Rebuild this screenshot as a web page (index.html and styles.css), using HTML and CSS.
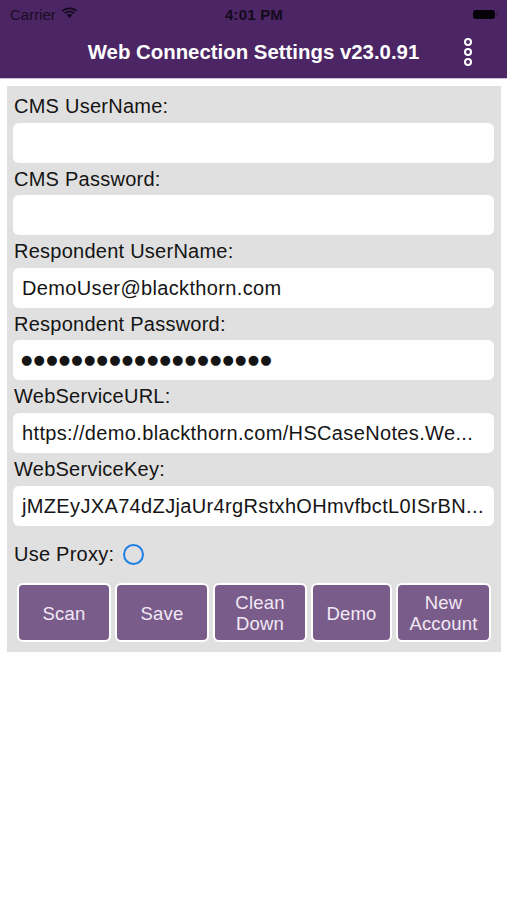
FILE: index.html
```html
<!DOCTYPE html>
<html>
<head>
<meta charset="utf-8">
<title>Web Connection Settings</title>
<link rel="stylesheet" href="styles.css">
</head>
<body>
<header class="topbar">
  <div class="statusbar">
    <div class="carrier">Carrier
      <svg class="wifi" width="17" height="12" viewBox="0 0 17 12">
        <path d="M8.5 2.2c2.5 0 4.8 1 6.5 2.6l1.3-1.3C14.2 1.5 11.5.4 8.5.4S2.8 1.5.7 3.5L2 4.8c1.7-1.6 4-2.6 6.5-2.6z" fill="#140a1c"/>
        <path d="M8.5 5.5c1.6 0 3 .6 4.1 1.6l1.3-1.3C12.5 4.5 10.6 3.7 8.5 3.7S4.5 4.5 3.1 5.8l1.3 1.3c1.1-1 2.5-1.6 4.1-1.6z" fill="#140a1c"/>
        <path d="M8.5 6.9c1.1 0 2.1.4 2.8 1.1l-2.8 2.9-2.8-2.9c.7-.7 1.7-1.1 2.8-1.1z" fill="#140a1c"/>
      </svg>
    </div>
    <div class="time">4:01 PM</div>
    <div class="battery"><span class="batt-body"></span><span class="batt-nub"></span></div>
  </div>
  <div class="navbar">
    <h1 class="title">Web Connection Settings v23.0.91</h1>
    <svg class="kebab" width="12" height="32" viewBox="0 0 12 32">
      <circle cx="6" cy="6" r="3" fill="#4b2564" stroke="#fff" stroke-width="2"/>
      <circle cx="6" cy="16" r="3" fill="#4b2564" stroke="#fff" stroke-width="2"/>
      <circle cx="6" cy="26" r="3" fill="#4b2564" stroke="#fff" stroke-width="2"/>
    </svg>
  </div>
</header>

<main class="panel">
  <div class="field">
    <div class="label">CMS UserName:</div>
    <div class="input"></div>
  </div>
  <div class="field">
    <div class="label">CMS Password:</div>
    <div class="input"></div>
  </div>
  <div class="field">
    <div class="label">Respondent UserName:</div>
    <div class="input">DemoUser@blackthorn.com</div>
  </div>
  <div class="field">
    <div class="label">Respondent Password:</div>
    <div class="input dots">●●●●●●●●●●●●●●●●●●●●</div>
  </div>
  <div class="field">
    <div class="label">WebServiceURL:</div>
    <div class="input">https://demo.blackthorn.com/HSCaseNotes.We...</div>
  </div>
  <div class="field">
    <div class="label">WebServiceKey:</div>
    <div class="input">jMZEyJXA74dZJjaUr4rgRstxhOHmvfbctL0ISrBN...</div>
  </div>
  <div class="proxy">
    <span class="proxy-label">Use Proxy:</span>
    <span class="radio"></span>
  </div>
  <div class="buttons">
    <button class="btn">Scan</button>
    <button class="btn">Save</button>
    <button class="btn">Clean<br>Down</button>
    <button class="btn">Demo</button>
    <button class="btn">New<br>Account</button>
  </div>
</main>
</body>
</html>
```
FILE: styles.css
```css
* { box-sizing: border-box; }
html, body { margin: 0; padding: 0; background: #ffffff; }
body {
  width: 507px;
  height: 900px;
  font-family: "Liberation Sans", Arial, sans-serif;
  color: #111;
}
.topbar {
  background: #4b2564;
  height: 79px;
  border-bottom: 1px solid #cdbfd6;
}
.statusbar {
  height: 28px;
  display: flex;
  align-items: center;
  justify-content: space-between;
  padding: 0 9px 0 10px;
}
.carrier {
  display: flex;
  align-items: center;
  gap: 5px;
  font-size: 15px;
  color: #1a0d24;
  width: 120px;
}
.wifi { margin-top: -2px; }
.time {
  font-size: 15px;
  font-weight: bold;
  color: #140a1c;
  letter-spacing: 0.2px;
}
.battery {
  width: 120px;
  display: flex;
  justify-content: flex-end;
  align-items: center;
  gap: 1px;
}
.batt-body {
  width: 22px;
  height: 9px;
  background: #050208;
  border-radius: 3px;
}
.batt-nub {
  width: 2px;
  height: 4px;
  background: #3a1f4c;
  border-radius: 0 1px 1px 0;
}
.navbar {
  height: 50px;
  display: flex;
  align-items: center;
  justify-content: center;
  position: relative;
}
.title {
  margin: 0 0 2px 0;
  font-size: 20.4px;
  font-weight: bold;
  color: #ffffff;
}
.kebab {
  position: absolute;
  right: 33px;
  top: 8px;
}
.panel {
  margin: 7px 6px 0 7px;
  background: #e0e0e0;
  padding: 4px 7px 10px 6px;
}
.field { display: flex; flex-direction: column; }
.label {
  height: 32.6px;
  line-height: 32px;
  font-size: 20px;
  padding-left: 1px;
  color: #141414;
  letter-spacing: 0.25px;
}
.input {
  height: 40px;
  background: #ffffff;
  border-radius: 6px;
  font-size: 20px;
  line-height: 40px;
  padding-left: 9px;
  color: #151515;
  letter-spacing: 0.35px;
  white-space: nowrap;
  overflow: hidden;
}
.input.dots {
  font-family: "DejaVu Sans", sans-serif;
  font-size: 13px;
  letter-spacing: 1.25px;
  padding-left: 8px;
}
.proxy {
  height: 57px;
  display: flex;
  align-items: center;
  padding-left: 1px;
}
.proxy-label {
  font-size: 20px;
  color: #141414;
  letter-spacing: 0.25px;
}
.radio {
  width: 21px;
  height: 21px;
  border: 2.5px solid #1f7fe6;
  border-radius: 50%;
  margin-left: 9px;
}
.buttons {
  display: grid;
  grid-template-columns: 94px 94px 94px 81px 95px;
  gap: 4px;
  padding-left: 4px;
}
.btn {
  height: 59px;
  background: #7a5c8a;
  border: 2px solid #ffffff;
  border-radius: 6px;
  color: #f2e9f6;
  font-family: "Liberation Sans", Arial, sans-serif;
  font-size: 18.5px;
  line-height: 21px;
  padding: 2px 0 0 0;
  letter-spacing: 0.2px;
}
```
